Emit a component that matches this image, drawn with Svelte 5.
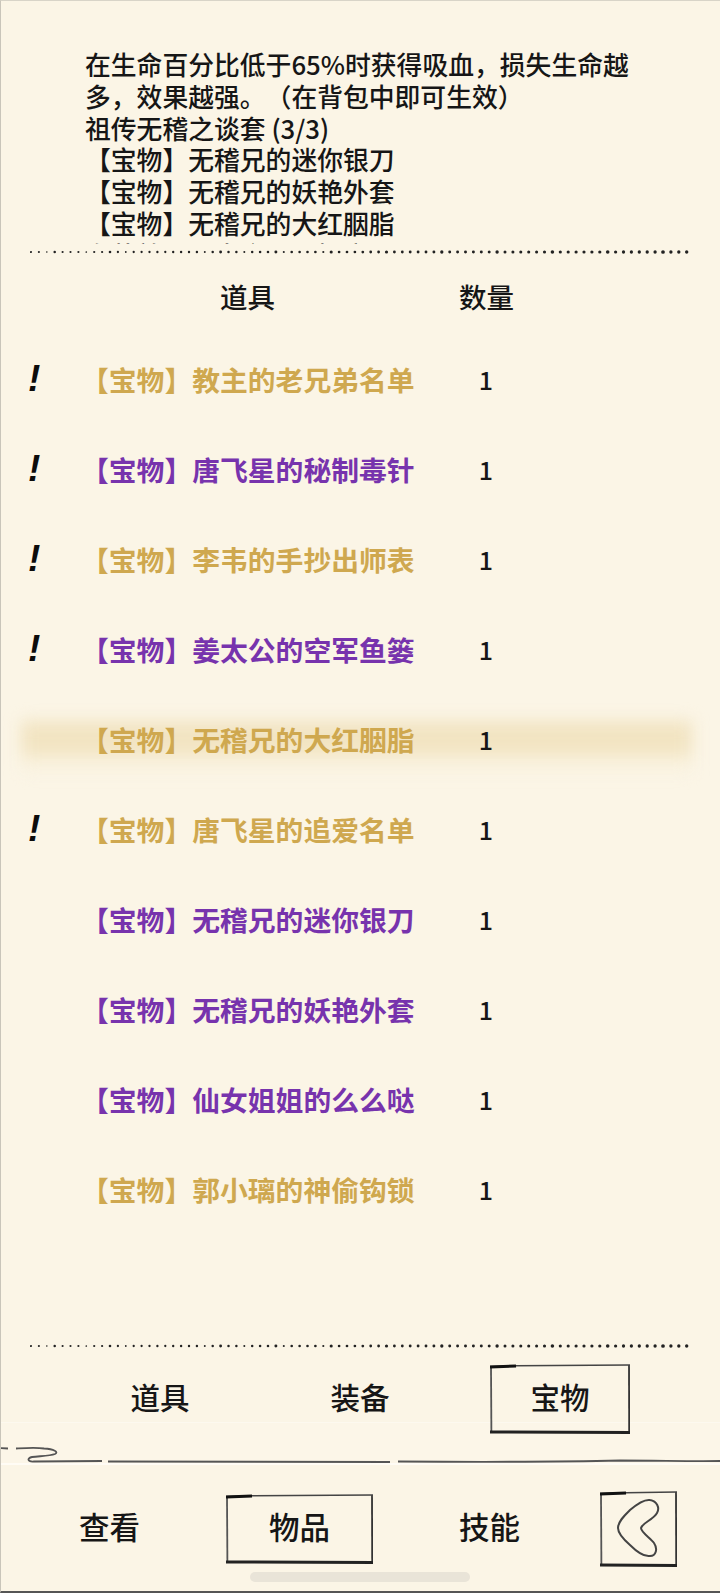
<script>
  const goldC = 'gold';
  const purpleC = 'purple';
  const items = [
    { name: '教主的老兄弟名单', tone: goldC, mark: true },
    { name: '唐飞星的秘制毒针', tone: purpleC, mark: true },
    { name: '李韦的手抄出师表', tone: goldC, mark: true },
    { name: '姜太公的空军鱼篓', tone: purpleC, mark: true },
    { name: '无稽兄的大红胭脂', tone: goldC, mark: false, active: true },
    { name: '唐飞星的追爱名单', tone: goldC, mark: true },
    { name: '无稽兄的迷你银刀', tone: purpleC, mark: false },
    { name: '无稽兄的妖艳外套', tone: purpleC, mark: false },
    { name: '仙女姐姐的么么哒', tone: purpleC, mark: false },
    { name: '郭小璃的神偷钩锁', tone: goldC, mark: false }
  ];
  // dots get a little heavier toward the right, as in the ink-drawn divider
  const dots = Array.from({ length: 84 }, (_, i) => ({
    x: 1 + i * 7.9,
    r: 1.05 + (i / 84) * 0.65 + (i % 7 === 3 ? 0.2 : 0) - (i % 5 === 2 && i < 40 ? 0.25 : 0)
  }));
</script>

{#snippet divider()}
  <svg class="divider" viewBox="0 0 662 6" width="662" height="6" aria-hidden="true">
    {#each dots as d}
      <circle cx={d.x} cy="3" r={d.r} fill="#222" />
    {/each}
  </svg>
{/snippet}

{#snippet frame(w, h)}
  <svg class="frame" viewBox="0 0 {w} {h}" width={w} height={h} aria-hidden="true">
    <path d="M1 2 L1.4 {h - 2}" stroke="#555" stroke-width="1.8" fill="none" />
    <path d="M{w - 1} 1 L{w - 0.8} {h - 2}" stroke="#333" stroke-width="1.8" fill="none" />
    <path d="M0 2.5 L26 1.8 L{w} 1" stroke="#444" stroke-width="1.6" fill="none" />
    <path d="M0 3 L26 2" stroke="#111" stroke-width="3" fill="none" />
    <path d="M0 {h - 2} L{w} {h - 1.6}" stroke="#222" stroke-width="3" fill="none" />
  </svg>
{/snippet}

<div class="page">
  <section class="desc">
    <div class="desc-scroll">
      <p>在生命百分比低于65%时获得吸血，损失生命越多，效果越强。（在背包中即可生效）</p>
      <p>祖传无稽之谈套 (3/3)</p>
      <p>【宝物】无稽兄的迷你银刀</p>
      <p>【宝物】无稽兄的妖艳外套</p>
      <p>【宝物】无稽兄的大红胭脂</p>
      <p>套装效果：生命上限提高</p>
    </div>
  </section>

  {@render divider()}

  <header class="head">
    <span class="h-name">道具</span>
    <span class="h-count">数量</span>
  </header>

  <ul class="list">
    {#each items as it}
      <li class="row" class:active={it.active}>
        <span class="mark">{it.mark ? '!' : ''}</span>
        <span class="name {it.tone}">【宝物】{it.name}</span>
        <span class="count">1</span>
      </li>
    {/each}
  </ul>

  {@render divider()}

  <nav class="tabs">
    <span class="tab">道具</span>
    <span class="tab">装备</span>
    <span class="tab on">{@render frame(140, 70)}宝物</span>
  </nav>

  <div class="seam">
    <svg class="squiggle" viewBox="0 0 720 43" width="720" height="43" aria-hidden="true">
      <path d="M0 26 L8 26.5 M16 26.5 C24 26 36 25 44 26.5 C54 27 59 30 55 32 C50 34 40 34 32 35 C27 36 27 40 34 39.5 L102 39 M108 39.5 L390 40 M398 39.5 C480 40 560 40 620 38.5 C660 38.5 690 39.5 720 39" stroke="#555" stroke-width="1.8" fill="none" />
    </svg>
  </div>

  <nav class="bottom">
    <span class="b-tab">查看</span>
    <span class="b-tab on">{@render frame(147, 70)}物品</span>
    <span class="b-tab">技能</span>
    <span class="b-back">
      {@render frame(77, 76)}
      <svg class="heart" viewBox="0 0 77 76" width="77" height="76" aria-hidden="true">
        <path d="M30 19 C37 13 44 8 50 9 C57 10 60 17 57 22 C53 29 42 32 41 37 C41 41 50 47 54 52 C58 58 56 65 50 65 C44 66 36 60 30 54 C22 47 18 42 18 37 C18 30 25 24 30 19 Z" stroke="#444" stroke-width="2" fill="none" />
      </svg>
    </span>
  </nav>

  <div class="home"></div>
</div>

<style>
  :global(body) {
    margin: 0;
    background: #fbf5e6;
  }
  .page {
    width: 720px;
    height: 1593px;
    box-sizing: border-box;
    border-left: 1px solid #c9c5ba;
    border-top: 1px solid #d8d4c8;
    border-bottom: 2px solid #555;
    background: #fbf5e6;
    color: #161616;
    font-family: "Noto Sans CJK SC", "Noto Sans", sans-serif;
    font-weight: 500;
    text-spacing-trim: space-all;
    display: flex;
    flex-direction: column;
    overflow: hidden;
    position: relative;
  }
  .desc {
    height: 243px;
    box-sizing: border-box;
    padding: 47px 84px 0 84px;
    overflow: hidden;
    flex: none;
  }
  .desc p {
    margin: 0;
    font-size: 25.8px;
    line-height: 31.8px;
  }
  .divider {
    display: block;
    flex: none;
    margin: 5px 0 0 29px;
  }
  .list + .divider {
    margin-top: 4px;
  }
  .head {
    flex: none;
    height: 79px;
    box-sizing: border-box;
    padding-top: 25px;
    display: flex;
    align-items: flex-start;
    font-size: 27.5px;
    line-height: 32px;
  }
  .h-name {
    margin-left: 219px;
  }
  .h-count {
    margin-left: 184px;
  }
  .list {
    list-style: none;
    margin: 0;
    padding: 0;
    flex: none;
    height: 1005px;
  }
  .row {
    height: 90px;
    display: flex;
    align-items: center;
    position: relative;
  }
  .row.active::before {
    content: "";
    position: absolute;
    left: 20px;
    right: 28px;
    top: 27px;
    height: 50px;
    background: linear-gradient(#f2e4c2 0, #f2e4c2 62%, #f9f1dd 76%, #f9f2df 100%);
    filter: blur(8px);
  }
  .mark {
    position: relative;
    width: 80px;
    height: 40px;
    padding-left: 27px;
    box-sizing: border-box;
    font-family: "Liberation Sans", sans-serif;
    font-size: 37px;
    line-height: 40px;
    font-style: italic;
    font-weight: 700;
    color: #0c0c0c;
  }
  .name {
    position: relative;
    width: 335px;
    font-size: 27.8px;
    font-weight: 700;
    white-space: nowrap;
  }
  .gold {
    color: #cfa84f;
  }
  .purple {
    color: #7733ad;
  }
  .count {
    position: relative;
    width: 140px;
    text-align: center;
    font-size: 25px;
  }
  .tabs {
    flex: none;
    height: 58px;
    margin-top: 15px;
    display: flex;
    font-size: 29.5px;
    position: relative;
    z-index: 1;
  }
  .tab {
    position: relative;
    width: 140px;
    height: 70px;
    box-sizing: border-box;
    padding-bottom: 6px;
    flex: none;
    display: flex;
    align-items: center;
    justify-content: center;
    margin-left: 60px;
  }
  .tab:first-child {
    margin-left: 89px;
  }
  .frame {
    position: absolute;
    left: 0;
    top: 0;
  }
  .seam {
    flex: none;
    height: 43px;
    box-sizing: border-box;
    position: relative;
    border-top: 1px solid #fdf9ef;
    border-bottom: 2px solid #fffcf5;
    margin-left: -1px;
    background: #fcf6e8;
  }
  .squiggle {
    position: absolute;
    left: 0;
    top: -1px;
  }
  .bottom {
    flex: none;
    height: 76px;
    margin-top: 26px;
    display: flex;
    align-items: center;
    font-size: 30.5px;
    position: relative;
  }
  .b-tab {
    position: relative;
    height: 70px;
    width: 147px;
    box-sizing: border-box;
    padding-bottom: 6px;
    display: flex;
    align-items: center;
    justify-content: center;
  }
  .b-tab:first-child {
    margin-left: 35px;
  }
  .b-tab:nth-child(2) {
    margin-left: 43px;
  }
  .b-tab:nth-child(3) {
    margin-left: 43px;
  }
  .b-back {
    position: relative;
    width: 77px;
    height: 76px;
    margin-left: 37px;
  }
  .heart {
    position: absolute;
    left: 0;
    top: 0;
  }
  .home {
    position: absolute;
    left: 249px;
    top: 1571px;
    width: 220px;
    height: 10px;
    border-radius: 5px;
    background: #e9e4d8;
  }
</style>
